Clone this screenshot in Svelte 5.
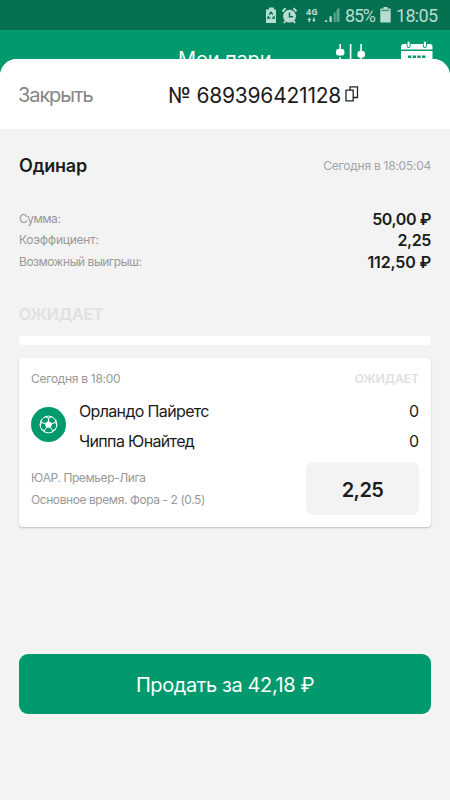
<script lang="ts">
  interface Detail {
    label: string
    value: string
    tone: string
  }

  interface Team {
    name: string
    score: number
  }

  const details: Detail[] = [
    { label: 'Сумма:', value: '50,00 ₽', tone: 'sum' },
    { label: 'Коэффициент:', value: '2,25', tone: 'odds' },
    { label: 'Возможный выигрыш:', value: '112,50 ₽', tone: 'win' },
  ]

  const teams: Team[] = [
    { name: 'Орландо Пайретс', score: 0 },
    { name: 'Чиппа Юнайтед', score: 0 },
  ]
</script>

<div class="screen">
  <!-- Status bar -->
  <div class="status">
    <svg class="status__icons" viewBox="0 0 76 22" aria-hidden="true">
      <!-- power saving -->
      <path fill="#b8dccf" d="M4 3.500h5v2h2v13.500H1V5.500h3z" />
      <path fill="none" stroke="#04704f" stroke-width="1.300" d="M4.200 10.500 6 8l1.800 2.500M8.800 12l.6 2.200H7M5.500 14.200H2.700l1-2.200" />
      <!-- alarm -->
      <circle cx="24.500" cy="12.200" r="6.400" fill="#b8dccf" />
      <path stroke="#b8dccf" stroke-width="2" fill="none" d="m17.500 7.500 3-3.300m8 0 3 3.300M20.500 17l-1.600 2m9.600-2 1.600 2" />
      <path stroke="#04704f" stroke-width="1.500" fill="none" d="M24.500 8.500v4.200h3.700" />
      <!-- data arrows -->
      <path fill="#b8dccf" d="m44.300 13.600 2 2.300h-1.300V18h-1.400v-2.100h-1.300zM48.200 13.600h1.400v2.100h1.300l-2 2.300-2-2.300h1.300z" />
      <!-- signal -->
      <path fill="#b8dccf" d="M60 16.300h2.200V18H60zM64.500 12.200h2.200V18h-2.200z" />
      <path fill="#5aa78e" d="M68.700 8.500h2V18h-2zM71.500 6l3-2.500V18h-3z" />
      <text x="41" y="11" class="status__net">4G</text>
    </svg>
    <span class="status__percent">85%</span>
    <svg class="status__battery" viewBox="0 0 11 16" aria-hidden="true">
      <path fill="#b8dccf" d="M3.500 0h4v1.500H10a.7.7 0 0 1 .7.7v12.600a.7.7 0 0 1-.7.7H1a.7.7 0 0 1-.7-.7V2.200a.7.7 0 0 1 .7-.7h2.500z" />
      <path fill="#3c9276" d="M1.500 2.800h8v1.300h-8z" />
    </svg>
    <span class="status__time">18:05</span>
  </div>

  <!-- Page behind the sheet -->
  <header class="topbar">
    <span class="topbar__title">Мои пари</span>
    <svg class="topbar__filters" viewBox="0 0 30 30" aria-hidden="true">
      <path stroke="#fff" stroke-width="1.600" d="M5.200 1v27M15.600 1v27M26.100 1v27" />
      <rect x="1" y="6" width="8.400" height="6.600" rx="2.400" fill="#fff" />
      <rect x="22.500" y="8" width="7.400" height="6.600" rx="2.200" fill="#fff" />
      <path fill="#009a6e" d="M4 12.600h2.400v1.600H4z" />
    </svg>
    <svg class="topbar__calendar" viewBox="0 0 32 30" aria-hidden="true">
      <path fill="#fff" d="M0 5.500A2.500 2.500 0 0 1 2.500 3H29a2.500 2.500 0 0 1 2.500 2.500V8.500H0zM0 10h31.500v18H0z" />
      <path stroke="#009a6e" stroke-width="4" stroke-linecap="round" d="M7.600 1.500v3.400M23.900 1.500v3.400" />
      <path stroke="#fff" stroke-width="2.200" stroke-linecap="round" d="M7.600 1.500v3.400M23.900 1.500v3.400" />
      <path stroke="#009a6e" stroke-width="2.600" stroke-dasharray="3.300 1.400" d="M7 15.700h17.500" />
    </svg>
  </header>

  <main class="sheet">
    <div class="sheet__head">
      <button class="sheet__close">Закрыть</button>
      <span class="sheet__number">№ 689396421128</span>
      <svg class="sheet__copy" viewBox="0 0 14 16" aria-hidden="true">
        <path fill="none" stroke="#222" stroke-width="1.300" d="M1 4.200h7.200v10.600H1zM5 4.200V.8h7.500v10.700H8.200" />
      </svg>
    </div>

    <section class="summary">
      <div class="summary__top">
        <h1 class="summary__title">Одинар</h1>
        <span class="summary__date">Сегодня в 18:05:04</span>
      </div>
      <dl class="details">
        {#each details as row}
          <div class="details__row details__row--{row.tone}">
            <dt class="details__label">{row.label}</dt>
            <dd class="details__value">{row.value}</dd>
          </div>
        {/each}
      </dl>
      <div class="summary__state">ОЖИДАЕТ</div>
      <div class="summary__bar"></div>
    </section>

    <article class="card">
      <div class="card__top">
        <span class="card__date">Сегодня в 18:00</span>
        <span class="card__state">ОЖИДАЕТ</span>
      </div>
      <div class="match">
        <svg class="match__icon" viewBox="0 0 35 35" aria-hidden="true">
          <circle cx="17.500" cy="17.500" r="17.500" fill="#009a6e" />
          <g fill="none" stroke="#fff" stroke-width="1" stroke-linejoin="round">
            <circle cx="17.500" cy="17.500" r="8.400" />
            <path d="M17.500 14.200V11M14.100 16.600l-3.200-1.100M15.400 20.800l-2 2.700M19.600 20.800l2 2.700M20.900 16.600l3.200-1.100" />
            <path d="m14 9.700 3.500 1.500L21 9.700M25 12.800l-.9 2.700 2 2.900M24.800 22.400l-3.200 1.100-.6 1.900M10 12.800l.9 2.700-2 2.900M10.200 22.400l3.200 1.100.6 1.900" />
          </g>
          <path fill="#fff" d="m17.500 13.700 3.700 2.700-1.400 4.400h-4.600l-1.400-4.400z" />
        </svg>
        <ul class="match__teams">
          {#each teams as team}
            <li class="match__team">
              <span class="match__name">{team.name}</span>
              <span>{team.score}</span>
            </li>
          {/each}
        </ul>
      </div>
      <div class="card__bottom">
        <div class="card__info">
          <span>ЮАР. Премьер-Лига</span>
          <span>Основное время. Фора - 2 (0.5)</span>
        </div>
        <div class="card__odds">2,25</div>
      </div>
    </article>

    <button class="sell">Продать за 42,18 ₽</button>
  </main>
</div>

<style>
  :global(body) {
    margin: 0;
    background: #009a6e;
  }

  .screen {
    width: 450px;
    height: 800px;
    overflow: hidden;
    background: #009a6e;
    color: #1c1c1c;
    font-family: Inter, 'Liberation Sans', sans-serif;
    white-space: nowrap;
  }

  button {
    border: 0;
    padding: 0;
    background: none;
    font-family: inherit;
  }

  /* Status bar */
  .status {
    display: flex;
    box-sizing: border-box;
    height: 30px;
    padding: 4px 0 0 265px;
    background: #04704f;
    color: #b8dccf;
    font: 400 18px/23px Roboto, sans-serif;
  }

  .status__icons {
    flex: none;
    width: 76px;
    height: 22px;
  }

  .status__net {
    fill: #b8dccf;
    font: 700 9px 'Noto Sans', sans-serif;
  }

  .status__percent {
    width: 34px;
    margin-left: 4px;
    letter-spacing: -1.2px;
  }

  .status__battery {
    width: 11px;
    height: 16px;
    margin: 3px 0 0 1px;
  }

  .status__time {
    margin-left: 5px;
    letter-spacing: -0.7px;
  }

  /* Page header */
  .topbar {
    display: flex;
    height: 29px;
    padding-left: 178px;
    color: #fff;
  }

  .topbar__title {
    width: 157px;
    padding-top: 17px;
    font-size: 20px;
    line-height: 24px;
    letter-spacing: -0.15px;
  }

  .topbar__filters {
    flex: none;
    width: 30px;
    height: 30px;
    margin-top: 13px;
  }

  .topbar__calendar {
    flex: none;
    width: 32px;
    height: 30px;
    margin: 11px 0 0 36px;
  }

  /* Sheet, painted over the lower part of the header */
  .sheet {
    position: relative;
    height: 741px;
    overflow: hidden;
    border-radius: 17px 17px 0 0;
    background: #f3f3f3;
  }

  .sheet__head {
    display: flex;
    align-items: center;
    height: 70px;
    padding: 2px 0 0 18px;
    box-sizing: border-box;
    background: #fff;
  }

  .sheet__close {
    width: 150px;
    text-align: left;
    color: #858585;
    font-size: 20px;
    letter-spacing: -1.1px;
  }

  .sheet__number {
    width: 174px;
    font-size: 21px;
    letter-spacing: -0.22px;
  }

  .sheet__copy {
    width: 14px;
    height: 16px;
    margin: 0 0 3px 3px;
  }

  /* Summary */
  .summary {
    padding: 24px 19px 0;
  }

  .summary__top {
    display: flex;
    align-items: center;
    justify-content: space-between;
    height: 24px;
  }

  .summary__title {
    margin: 0;
    font-size: 18px;
    font-weight: 600;
    letter-spacing: -0.2px;
  }

  .summary__date {
    color: #a3a3a3;
    font-size: 12px;
    letter-spacing: -0.25px;
  }

  .details {
    margin: 31px 0 0;
  }

  .details__row {
    display: flex;
    justify-content: space-between;
    height: 21.3px;
    line-height: 22px;
  }

  .details__label {
    color: #999;
    font-size: 12px;
    line-height: 21px;
    letter-spacing: -0.47px;
  }

  .details__row--odds .details__label {
    letter-spacing: -0.25px;
  }

  .details__value {
    margin: 0;
    font-size: 16px;
    font-weight: 600;
    letter-spacing: -0.4px;
  }

  .details__row--win .details__value {
    letter-spacing: -0.15px;
  }

  .summary__state {
    margin-top: 30px;
    color: #e0e0e0;
    font-size: 16px;
    font-weight: 600;
    line-height: 24px;
    letter-spacing: -0.2px;
  }

  .summary__bar {
    height: 9px;
    margin-top: 10px;
    border-radius: 4px;
    background: #fff;
  }

  /* Bet card */
  .card {
    box-sizing: border-box;
    height: 169px;
    margin: 13px 19px 0;
    padding: 10px 12px 0;
    border-radius: 4px;
    background: #fff;
    box-shadow: 0 1px 2px rgba(0, 0, 0, 0.22);
  }

  .card__top {
    display: flex;
    justify-content: space-between;
    height: 20px;
    line-height: 21px;
    font-size: 12px;
  }

  .card__date {
    color: #999;
    letter-spacing: -0.3px;
  }

  .card__state {
    color: #e0e0e0;
    font-weight: 600;
  }

  .match {
    display: flex;
    height: 60px;
    margin-top: 8px;
  }

  .match__icon {
    flex: none;
    width: 35px;
    height: 35px;
    margin-top: 11px;
  }

  .match__teams {
    flex: 1;
    margin: 0 0 0 13px;
    padding: 0;
    list-style: none;
  }

  .match__team {
    display: flex;
    justify-content: space-between;
    height: 30px;
    font-size: 16px;
    line-height: 30px;
  }

  .match__name {
    letter-spacing: -0.65px;
  }

  .card__bottom {
    display: flex;
    justify-content: space-between;
    margin-top: 7px;
  }

  .card__info {
    display: flex;
    flex-direction: column;
    padding-top: 4px;
    color: #999;
    font-size: 12px;
    line-height: 22.5px;
    letter-spacing: -0.42px;
  }

  .card__odds {
    width: 113px;
    height: 53px;
    margin-top: -0.5px;
    border-radius: 7px;
    background: #f3f3f3;
    font-size: 20px;
    font-weight: 600;
    line-height: 57px;
    letter-spacing: -0.6px;
    text-align: center;
  }

  .sell {
    display: block;
    box-sizing: border-box;
    width: 412px;
    height: 60px;
    margin: 127px 0 0 19px;
    padding-top: 3px;
    border-radius: 9px;
    background: #009a6e;
    color: #fff;
    font-size: 20px;
    letter-spacing: -0.4px;
  }
</style>
